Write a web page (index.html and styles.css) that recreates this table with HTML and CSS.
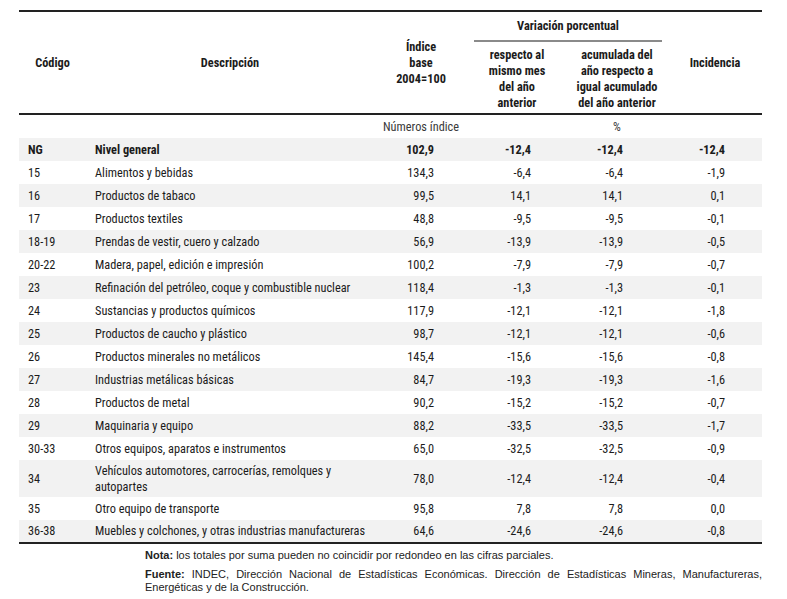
FILE: index.html
```html
<!DOCTYPE html>
<html lang="es">
<head>
<meta charset="utf-8">
<link rel="stylesheet" href="styles.css">
</head>
<body>
<div class="page">
<table class="tbl">
  <colgroup>
    <col class="c-cod"><col class="c-desc"><col class="c-ind"><col class="c-resp"><col class="c-acum"><col class="c-inc">
  </colgroup>
  <thead>
    <tr class="h1">
      <th rowspan="2">Código</th>
      <th rowspan="2">Descripción</th>
      <th rowspan="2">Índice<br>base<br>2004=100</th>
      <th colspan="2" class="group"><span class="group-label">Variación porcentual</span></th>
      <th rowspan="2">Incidencia</th>
    </tr>
    <tr class="h2">
      <th>respecto al<br>mismo mes<br>del año<br>anterior</th>
      <th>acumulada del<br>año respecto a<br>igual acumulado<br>del año anterior</th>
    </tr>
  </thead>
  <tbody>
    <tr class="units">
      <td></td><td></td><td class="u-ind">Números índice</td><td></td><td class="u-pct">%</td><td></td>
    </tr>
    <tr class="shade bold"><td>NG</td><td>Nivel general</td><td class="n n-ind">102,9</td><td class="n n-resp">-12,4</td><td class="n n-acum">-12,4</td><td class="n n-inc">-12,4</td></tr>
    <tr><td>15</td><td>Alimentos y bebidas</td><td class="n n-ind">134,3</td><td class="n n-resp">-6,4</td><td class="n n-acum">-6,4</td><td class="n n-inc">-1,9</td></tr>
    <tr class="shade"><td>16</td><td>Productos de tabaco</td><td class="n n-ind">99,5</td><td class="n n-resp">14,1</td><td class="n n-acum">14,1</td><td class="n n-inc">0,1</td></tr>
    <tr><td>17</td><td>Productos textiles</td><td class="n n-ind">48,8</td><td class="n n-resp">-9,5</td><td class="n n-acum">-9,5</td><td class="n n-inc">-0,1</td></tr>
    <tr class="shade"><td>18-19</td><td>Prendas de vestir, cuero y calzado</td><td class="n n-ind">56,9</td><td class="n n-resp">-13,9</td><td class="n n-acum">-13,9</td><td class="n n-inc">-0,5</td></tr>
    <tr><td>20-22</td><td>Madera, papel, edición e impresión</td><td class="n n-ind">100,2</td><td class="n n-resp">-7,9</td><td class="n n-acum">-7,9</td><td class="n n-inc">-0,7</td></tr>
    <tr class="shade"><td>23</td><td>Refinación del petróleo, coque y combustible nuclear</td><td class="n n-ind">118,4</td><td class="n n-resp">-1,3</td><td class="n n-acum">-1,3</td><td class="n n-inc">-0,1</td></tr>
    <tr><td>24</td><td>Sustancias y productos químicos</td><td class="n n-ind">117,9</td><td class="n n-resp">-12,1</td><td class="n n-acum">-12,1</td><td class="n n-inc">-1,8</td></tr>
    <tr class="shade"><td>25</td><td>Productos de caucho y plástico</td><td class="n n-ind">98,7</td><td class="n n-resp">-12,1</td><td class="n n-acum">-12,1</td><td class="n n-inc">-0,6</td></tr>
    <tr><td>26</td><td>Productos minerales no metálicos</td><td class="n n-ind">145,4</td><td class="n n-resp">-15,6</td><td class="n n-acum">-15,6</td><td class="n n-inc">-0,8</td></tr>
    <tr class="shade"><td>27</td><td>Industrias metálicas básicas</td><td class="n n-ind">84,7</td><td class="n n-resp">-19,3</td><td class="n n-acum">-19,3</td><td class="n n-inc">-1,6</td></tr>
    <tr><td>28</td><td>Productos de metal</td><td class="n n-ind">90,2</td><td class="n n-resp">-15,2</td><td class="n n-acum">-15,2</td><td class="n n-inc">-0,7</td></tr>
    <tr class="shade"><td>29</td><td>Maquinaria y equipo</td><td class="n n-ind">88,2</td><td class="n n-resp">-33,5</td><td class="n n-acum">-33,5</td><td class="n n-inc">-1,7</td></tr>
    <tr><td>30-33</td><td>Otros equipos, aparatos e instrumentos</td><td class="n n-ind">65,0</td><td class="n n-resp">-32,5</td><td class="n n-acum">-32,5</td><td class="n n-inc">-0,9</td></tr>
    <tr class="shade tall"><td>34</td><td>Vehículos automotores, carrocerías, remolques y<br>autopartes</td><td class="n n-ind">78,0</td><td class="n n-resp">-12,4</td><td class="n n-acum">-12,4</td><td class="n n-inc">-0,4</td></tr>
    <tr><td>35</td><td>Otro equipo de transporte</td><td class="n n-ind">95,8</td><td class="n n-resp">7,8</td><td class="n n-acum">7,8</td><td class="n n-inc">0,0</td></tr>
    <tr class="shade last"><td>36-38</td><td>Muebles y colchones, y otras industrias manufactureras</td><td class="n n-ind">64,6</td><td class="n n-resp">-24,6</td><td class="n n-acum">-24,6</td><td class="n n-inc">-0,8</td></tr>
  </tbody>
</table>
<div class="notes">
  <p class="note"><b>Nota:</b> los totales por suma pueden no coincidir por redondeo en las cifras parciales.</p>
  <p class="note just"><b>Fuente:</b> INDEC, Dirección Nacional de Estadísticas Económicas. Dirección de Estadísticas Mineras, Manufactureras, Energéticas y de la Construcción.</p>
</div>
</div>
</body>
</html>
```

FILE: styles.css
```css
html, body {
  margin: 0;
  padding: 0;
  background: #ffffff;
}

.page {
  padding: 10px 25px 0 19px;
  width: 743px;
}

.tbl {
  width: 743px;
  border-collapse: collapse;
  table-layout: fixed;
  font-family: "Liberation Sans Narrow", "Roboto Condensed", "DejaVu Sans Condensed", "Liberation Sans", sans-serif;
  font-size: 12.3px;
  color: #1b1b1b;
}

.c-cod { width: 67px; }
.c-desc { width: 288px; }
.c-ind { width: 94px; }
.c-resp { width: 98px; }
.c-acum { width: 102px; }
.c-inc { width: 94px; }

.tbl thead tr.h1 th {
  border-top: 2px solid #222;
}

.tbl thead th {
  font-weight: bold;
  text-align: center;
  vertical-align: middle;
  line-height: 16px;
  padding: 0;
}

.tbl thead tr.h2 th {
  height: 69px;
  padding-top: 2px;
  padding-bottom: 0;
  vertical-align: middle;
}

.tbl thead tr.h2 th,
.tbl thead tr.h1 th[rowspan] {
  border-bottom: 2px solid #222;
}

.tbl thead th.group {
  height: 28px;
  padding: 0 6px;
  vertical-align: top;
}

.group-label {
  display: block;
  padding-top: 6px;
  padding-bottom: 6px;
  border-bottom: 2px solid #8a8a8a;
}

.tbl td {
  padding: 0 9px;
  height: 23px;
  line-height: 16px;
  vertical-align: middle;
  white-space: nowrap;
}

.tbl tr.units td {
  height: 23px;
  color: #3a3a3a;
  padding: 0;
}

.u-ind { text-align: center; }
.u-pct { text-align: center; padding-left: 0; }

.tbl tr.shade td {
  background: #f2f2f2;
}

.tbl tr.bold td {
  font-weight: bold;
}

.tbl tr.tall td {
  height: 37px;
}

.tbl tr.last td {
  border-bottom: 2px solid #222;
  height: 22px;
}

.tbl td.n { text-align: right; }
.tbl td.n-ind { padding-right: 34px; }
.tbl td.n-resp { padding-right: 35px; }
.tbl td.n-acum { padding-right: 45px; }
.tbl td.n-inc { padding-right: 37px; }

.notes {
  margin-left: 126px;
  padding-top: 5px;
  font-family: "Liberation Sans", Arial, sans-serif;
  font-size: 11px;
  color: #222;
}

.note {
  margin: 0 0 6px 0;
  line-height: 13px;
}

.note.just {
  text-align: justify;
}
```
